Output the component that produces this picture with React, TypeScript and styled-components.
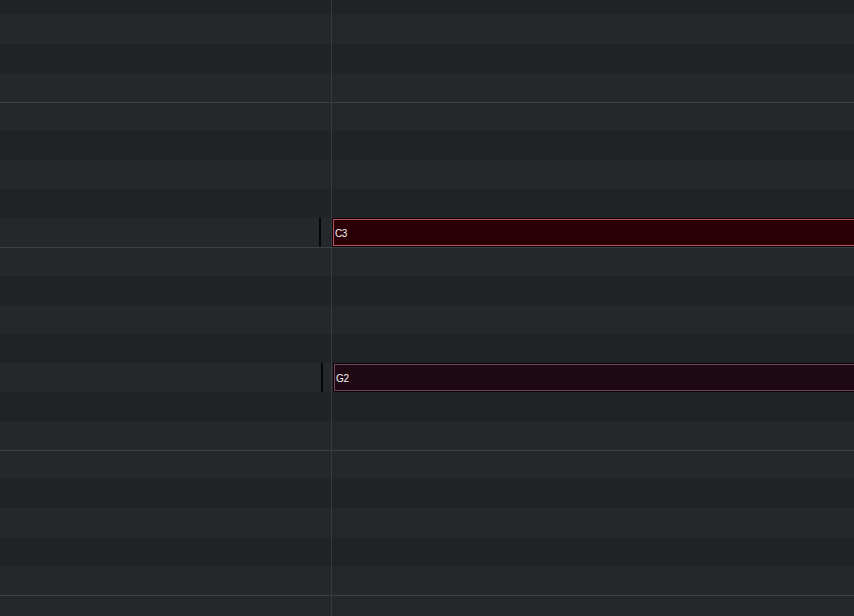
import React from "react";
import styled, { createGlobalStyle } from "styled-components";

const Global = createGlobalStyle`
  html, body { margin: 0; padding: 0; background: #222326; overflow: hidden; }
  body { font-family: "Liberation Sans", Arial, sans-serif; }
`;

const Roll = styled.div`
  width: 854px;
  height: 616px;
  overflow: hidden;
`;

const Lanes = styled.div`
  display: flex;
  flex-direction: column;
  margin-top: -14px;
`;

const Row = styled.div<{ $black: boolean; $line: boolean }>`
  display: grid;
  grid-template-columns: 331px 1px 1fr;
  height: 29px;
  box-sizing: border-box;
  background: ${(p) => (p.$black ? "#212225" : "#25282b")};
  border-top: ${(p) => (p.$line ? "1px solid #3b3e42" : "none")};
`;

const KeyCell = styled.div`
  position: relative;
`;

const Divider = styled.div`
  background: #36393d;
`;

const Track = styled.div`
  position: relative;
  display: flex;
  min-width: 0;
`;

const Marker = styled.div<{ $right: number }>`
  position: absolute;
  top: 0;
  bottom: 0;
  right: ${(p) => p.$right}px;
  width: 2px;
  background: #060606;
`;

const Note = styled.div<{ $selected: boolean; $offset: number }>`
  flex: 1;
  margin-left: ${(p) => p.$offset}px;
  margin-right: -4px;
  box-sizing: border-box;
  height: 29px;
  border: 1px solid #0c0003;
  background: ${(p) => (p.$selected ? "#2a0006" : "#1f0912")};
  box-shadow: inset 0 0 0 1px ${(p) => (p.$selected ? "#b5545f" : "#6f4660")};
  display: flex;
  align-items: center;
  padding: 2px 0 0 2px;
  color: #f2f2f2;
  font-size: 10px;
  letter-spacing: -0.4px;
  line-height: 1;
`;

type Lane = {
  name: string;
  black: boolean;
  note?: { selected: boolean; offset: number; marker: number };
};

const names = [
  "G#3", "G3", "F#3", "F3", "E3", "D#3", "D3", "C#3", "C3",
  "B2", "A#2", "A2", "G#2", "G2", "F#2", "F2", "E2", "D#2", "D2", "C#2", "C2",
  "B1", "A#1",
];

const lanes: Lane[] = names.map((n) => ({
  name: n,
  black: n.includes("#"),
  note:
    n === "C3"
      ? { selected: true, offset: 0, marker: 10 }
      : n === "G2"
      ? { selected: false, offset: 1, marker: 8 }
      : undefined,
}));

export default function App() {
  return (
    <Roll>
      <Global />
      <Lanes>
        {lanes.map((l) => (
          <Row
            key={l.name}
            $black={l.black}
            $line={l.name.startsWith("E") || l.name.startsWith("B")}
          >
            <KeyCell>{l.note && <Marker $right={l.note.marker} />}</KeyCell>
            <Divider />
            <Track>
              {l.note && (
                <Note $selected={l.note.selected} $offset={l.note.offset}>
                  {l.name}
                </Note>
              )}
            </Track>
          </Row>
        ))}
      </Lanes>
    </Roll>
  );
}
